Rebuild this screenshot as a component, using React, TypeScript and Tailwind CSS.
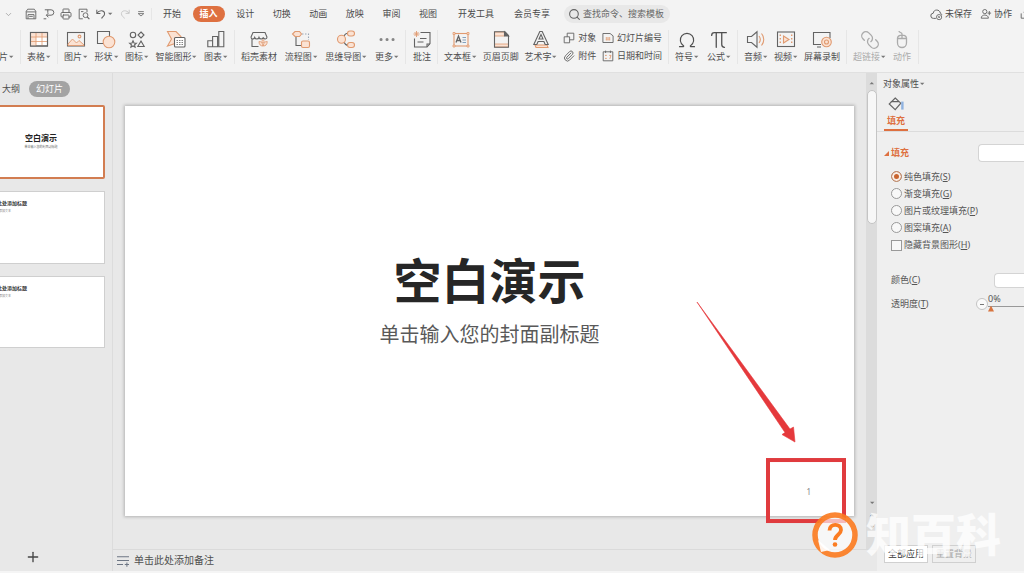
import { useState } from 'react'
import type { ReactNode } from 'react'
import { ChevronDown, Link, Mouse, Omega, Paperclip, Pi, Plus, Printer, Search } from 'lucide-react'

const INK = '#636363'
const ORANGE = '#e09a70'
const PEACH = '#fbe2d3'

const TABS = ['开始', '插入', '设计', '切换', '动画', '放映', '审阅', '视图']
const WIDE_TABS = ['开发工具', '会员专享']

const FILL_OPTIONS = [
  { id: 'solid', label: '纯色填充', hotkey: 'S' },
  { id: 'gradient', label: '渐变填充', hotkey: 'G' },
  { id: 'picture', label: '图片或纹理填充', hotkey: 'P' },
  { id: 'pattern', label: '图案填充', hotkey: 'A' },
]

function Svg({ children, className = 'size-5' }: { children: ReactNode; className?: string }) {
  return (
    <svg viewBox="0 0 20 20" className={`${className} shrink-0`} fill="none" stroke={INK} strokeWidth="1.1" aria-hidden="true">
      {children}
    </svg>
  )
}

function Caret({ className = '' }: { className?: string }) {
  return (
    <svg viewBox="0 0 6 4" className={`w-[6px] h-1 shrink-0 ${className}`} aria-hidden="true">
      <path d="M1 .8h4.400L3.200 3z" fill="#777" />
    </svg>
  )
}

/* ribbon icons */

const TableIcon = () => (
  <Svg>
    <rect x="1.5" y="2.5" width="17" height="13.5" fill="#fff" />
    <path d="M2 3h16v4H2zM2 7h5v9H2z" fill={PEACH} stroke="none" />
    <path d="M2 7h16M2 11.5h16M7 3v13M13 3v13" stroke={ORANGE} strokeWidth=".8" />
    <rect x="1.5" y="2.5" width="17" height="13.5" />
  </Svg>
)

const PictureIcon = () => (
  <Svg>
    <rect x="1.5" y="2.5" width="17" height="13.5" />
    <path d="M2 14l4.500-5 4 4 2.500-2.500 5 4.500v.5H2z" fill={PEACH} stroke={ORANGE} strokeWidth=".9" />
    <circle cx="13.500" cy="6.500" r="1.400" stroke={ORANGE} />
  </Svg>
)

const ShapesIcon = () => (
  <Svg>
    <path d="M1.500 1.500h12v12h-12z" />
    <circle cx="13" cy="12" r="5.800" fill={PEACH} stroke={ORANGE} />
  </Svg>
)

const IconsIcon = () => (
  <Svg>
    <circle cx="6" cy="5" r="2.700" />
    <path d="M14 2l3 3-3 3-3-3zM14 11l3.200 5.500h-6.400zM6 10.800l1 2.200 2.400.2-1.800 1.600.5 2.300L6 15.900l-2.100 1.200.5-2.300-1.800-1.600 2.400-.2z" />
  </Svg>
)

const SmartIcon = () => (
  <Svg>
    <path d="M1.500 1.500h8.500l5 5-3 6-10.500 3.500 4-7z" fill={PEACH} stroke={ORANGE} />
    <rect x="8.500" y="7.500" width="10.500" height="9.500" rx="1" fill="#fff" />
    <path d="M10.500 10.500h6.500M10.500 12.500h6.500M10.500 14.500h6.500" strokeWidth=".8" strokeDasharray="1.500 1" />
  </Svg>
)

const ChartIcon = () => (
  <Svg>
    <path d="M1.800 10.800h4.800v6H1.800zM6.600 6.500h5v10.300h-5zM12.800 1.500h5v15.300h-5z" />
  </Svg>
)

const StoreIcon = () => (
  <Svg>
    <path d="M4 2.500h12l2 4.500c0 2.600-3.200 2.600-3.700.5-.5 2-3.700 2-4.300 0-.5 2-3.700 2-4.300 0C5 9.600 2 9.600 2 7zM3 9v7.500h6.500" />
    <path d="M14 9.500c1.500 1 1.500 2.500 0 3.600-1.500-1.100-1.500-2.600 0-3.600zM10 11.500c2 0 3.500 1 4 4.500-2.500 0-4-1.500-4-4.500zM18.200 11.500c-2 0-3.500 1-4 4.500 2.500 0 4-1.500 4-4.500z" fill={PEACH} stroke={ORANGE} strokeWidth=".9" />
  </Svg>
)

const FlowIcon = () => (
  <Svg>
    <path d="M5 7v8.500h6" />
    <path d="M11 4h6.500v6" stroke="#9aa8b8" strokeDasharray="1.500 1.500" />
    <path d="M4 1.500h4.500L10.500 4l-2 2.500H4L1.500 4z" fill={PEACH} stroke={ORANGE} />
    <rect x="10.500" y="11" width="8" height="6.500" rx="1.500" fill={PEACH} stroke={ORANGE} />
  </Svg>
)

const MindIcon = () => (
  <Svg>
    <path d="M8 6c1-2 2-2.800 4-2.800M8 12c1 2.500 2 3.300 4 3.300" />
    <circle cx="5.500" cy="9.300" r="4" fill={PEACH} stroke={ORANGE} />
    <rect x="11.500" y="1" width="7" height="5" rx="2.500" fill={PEACH} stroke={ORANGE} />
    <rect x="11.500" y="12.500" width="7" height="5" rx="2.500" fill={PEACH} stroke={ORANGE} />
  </Svg>
)

const MoreIcon = () => (
  <Svg>
    <path d="M4 9.500h.1M10 9.500h.1M16 9.500h.1" strokeWidth="3" strokeLinecap="round" stroke="#858585" />
  </Svg>
)

const CommentIcon = () => (
  <Svg>
    <path d="M8.500 2.500H18v11L15 17H2.500V8.500" />
    <path d="M15 17v-3h3M8 8.500h6.500M5.500 12h6" />
    <path d="M4.500 1v6M1.500 4h6M2.500 2l4 4M6.500 2l-4 4" stroke={ORANGE} strokeWidth=".9" />
  </Svg>
)

const TextBoxIcon = () => (
  <Svg>
    <rect x="3" y="3.500" width="14" height="12.500" stroke={ORANGE} />
    <path d="M2 2.500h2v2H2zM16 2.500h2v2h-2zM2 15h2v2H2zM16 15h2v2h-2z" fill={PEACH} stroke={ORANGE} strokeWidth=".8" />
    <path d="M5 12.500L7.500 6l2.500 6.500M6 10.500h3" strokeWidth="1.300" />
    <path d="M11.500 7.500H15M11.500 10H15M11.500 12.500H15" stroke="#7898b8" strokeWidth=".9" />
  </Svg>
)

const HeaderFooterIcon = () => (
  <Svg>
    <path d="M3.500 2h10v4h-10zM3.500 14h14v3h-14z" fill={PEACH} stroke={ORANGE} strokeWidth=".8" />
    <path d="M3.500 1.800h10.500l3.500 3.700v11.700h-14z" />
    <path d="M13.500 1.800l4 4.200h-4z" fill={INK} />
  </Svg>
)

const WordArtIcon = () => (
  <Svg>
    <path d="M4 15h12l1 2.500H5z" fill={PEACH} stroke={ORANGE} />
    <path d="M8.800 1.500h2.400l6 13h-3l-1.300-3H7.100l-1.300 3h-3zM8 9h4L10 4.500z" fill="#f3f3f3" />
  </Svg>
)

const AudioIcon = () => (
  <Svg>
    <path d="M1.500 6.500h4L11 1.800v15.400l-5.500-4.700h-4z" />
    <path d="M13 6c1.500 2 1.500 5 0 7M15.500 3.500c3 3.500 3 8.500 0 12" stroke={ORANGE} />
  </Svg>
)

const VideoIcon = () => (
  <Svg>
    <rect x="1.500" y="2" width="17" height="14.500" />
    <path d="M7.500 6l5.500 3.500L7.500 13z" stroke={ORANGE} fill={PEACH} />
    <path d="M4.300 4.500v10M15.700 4.500v10" stroke={ORANGE} strokeWidth="1.400" strokeDasharray="1.500 2" />
  </Svg>
)

const RecordIcon = () => (
  <Svg>
    <path d="M9 14.500H1.500v-12h16.500V8M5 17h4" />
    <circle cx="14.500" cy="12" r="4.800" fill={PEACH} stroke={ORANGE} />
    <circle cx="14.500" cy="12" r="2" stroke={ORANGE} />
  </Svg>
)

const ObjectIcon = () => (
  <Svg className="size-3">
    <path d="M7 2h11v11H7z" strokeWidth="1.500" />
    <path d="M2 8h9v10H2z" fill="#f3f3f3" strokeWidth="1.500" />
  </Svg>
)

const SlideNumberIcon = () => (
  <Svg className="size-3">
    <path d="M1.500 2.500h12l5 4v11h-17z" strokeWidth="1.500" />
    <path d="M8 8.500v5.500M12 8.500v5.500M6 10h8M6 13h8" stroke={ORANGE} strokeWidth="1.200" />
  </Svg>
)

const DateIcon = () => (
  <Svg className="size-3">
    <path d="M2 3h16v15H2zM6 1v4M14 1v4" strokeWidth="1.500" />
    <path d="M5 9h3M12 9h3l-2 6M5 14h3" stroke={ORANGE} strokeWidth="1.500" />
  </Svg>
)

function Group({ width, children }: { width: string; children: ReactNode }) {
  return (
    <div className={`flex items-center justify-between shrink-0 border-r border-[#e6e6e6] px-[6px] ${width}`}>
      {children}
    </div>
  )
}

function Tool({ icon, label, menu, disabled }: { icon: ReactNode; label: string; menu?: boolean; disabled?: boolean }) {
  return (
    <button disabled={disabled} className="flex flex-col items-center shrink-0 disabled:text-[#ababab]">
      <span className="h-5 flex items-center">{icon}</span>
      <span className="flex items-center h-[14px] leading-[14px]">
        {label}
        {menu && <Caret />}
      </span>
    </button>
  )
}

function SmallTool({ icon, label }: { icon: ReactNode; label: string }) {
  return (
    <button className="flex items-center gap-[3px] h-[14px] leading-[14px]">
      {icon}
      {label}
    </button>
  )
}

function TabBar() {
  const [active, setActive] = useState('插入')

  return (
    <div className="flex items-center h-7 text-[#4a4a4a]">
      <div className="flex items-center w-[152px] pl-1 shrink-0 border-r border-[#e6e6e6]">
        <button aria-label="文件菜单" className="mr-3"><ChevronDown size={9} color="#999" /></button>
        <button aria-label="保存" className="mr-[6px]">
          <Svg className="size-3"><path d="M2 5.500L4.500 2h11L18 5.500V18H2zM5 18v-7h10v7M2 6.500h16M7 14h6" strokeWidth="1.500" /></Svg>
        </button>
        <button aria-label="输出为PDF" className="mr-[5px]">
          <Svg className="size-3"><path d="M3 3h10.500a4.500 4.500 0 010 9H6M9 8.500L5.500 12 9 15.500M1 18h4.500M8 3v5" strokeWidth="1.600" /></Svg>
        </button>
        <button aria-label="打印" className="mr-[6px]"><Printer size={12} color={INK} strokeWidth={1.8} /></button>
        <button aria-label="打印预览" className="mr-[5px]">
          <Svg className="size-3"><path d="M8 18H2V2h13v5M5 6h4" strokeWidth="1.500" /><circle cx="12.500" cy="12" r="4" strokeWidth="1.500" /><path d="M15.500 15l3.500 3.500" strokeWidth="1.800" /></Svg>
        </button>
        <button aria-label="撤销" className="flex items-center mr-[6px]">
          <Svg className="size-3"><path d="M3 3v6h6M3.500 8.500C7 3 16 3.500 16 9.500c0 4-4 5-5 8" strokeWidth="1.700" /></Svg>
          <Caret />
        </button>
        <button aria-label="恢复" className="mr-[6px]">
          <Svg className="size-3"><path d="M17 3v6h-6M16.500 8.500C13 3 4 3.500 4 9.500c0 4 4 5 5 8" stroke="#c4c4c4" strokeWidth="1.500" /></Svg>
        </button>
        <button aria-label="自定义工具栏">
          <Svg className="size-2"><path d="M3 4h14M3 9h14l-7 6z" strokeWidth="2" /></Svg>
        </button>
      </div>
      <nav className="flex items-center shrink-0 ml-1">
        <div className="flex justify-between w-[288px]">
          {TABS.map(t => (
            <button
              key={t}
              onClick={() => setActive(t)}
              className={`px-[7px] h-4 leading-4 rounded-full ${active === t ? 'bg-[#de7040] text-white font-bold' : ''}`}
            >
              {t}
            </button>
          ))}
        </div>
        <div className="flex gap-5 ml-[14px]">
          {WIDE_TABS.map(t => (
            <button key={t} onClick={() => setActive(t)} className="leading-4">{t}</button>
          ))}
        </div>
      </nav>
      <label className="flex items-center gap-[2px] ml-[14px] pl-1 w-[106px] h-[18px] shrink-0 rounded-full bg-[#e8e8e8]">
        <Search size={13} color={INK} strokeWidth={2} className="shrink-0" />
        <input
          aria-label="查找"
          placeholder="查找命令、搜索模板"
          className="min-w-0 flex-1 bg-transparent outline-none leading-4 placeholder:text-[#666]"
        />
      </label>
      <div className="flex items-center gap-2 ml-auto shrink-0">
        <button className="flex items-center gap-[2px] leading-4">
          <Svg className="size-[13px]">
            <path d="M9 16H5.500a4 4 0 01-.5-8C5.500 1.500 15 1.500 16 8c1.500.5 2 1.500 2 3" strokeWidth="1.500" />
            <circle cx="14" cy="14" r="4" strokeWidth="1.300" /><path d="M12.500 12.500l3 3M15.500 12.500l-3 3" />
          </Svg>
          未保存
        </button>
        <button className="flex items-center gap-[2px] leading-4">
          <Svg className="size-3"><circle cx="8" cy="6" r="3.500" strokeWidth="1.500" /><path d="M2 17c0-7 12-7 12 0zM15.500 5v7M12.500 8.500h6" strokeWidth="1.500" /></Svg>
          协作
        </button>
        <button aria-label="分享" className="w-1 h-3 overflow-hidden">
          <Svg className="size-3"><path d="M2 9v8h15V9M6 7l4-4 4 4M10 3v9" strokeWidth="1.500" /></Svg>
        </button>
      </div>
    </div>
  )
}

function Ribbon() {
  return (
    <div className="flex h-11 pt-[2px] pb-2 overflow-hidden text-[#4f4f4f]">
      <div className="flex items-end justify-end w-[21px] pr-[6px] shrink-0 border-r border-[#e6e6e6]">
        <button className="flex items-center h-[14px] leading-[14px]">片<Caret /></button>
      </div>
      <Group width="w-[37px]">
        <Tool icon={<TableIcon />} label="表格" menu />
      </Group>
      <Group width="w-[177px]">
        <Tool icon={<PictureIcon />} label="图片" menu />
        <Tool icon={<ShapesIcon />} label="形状" menu />
        <Tool icon={<IconsIcon />} label="图标" menu />
        <Tool icon={<SmartIcon />} label="智能图形" menu />
        <Tool icon={<ChartIcon />} label="图表" menu />
      </Group>
      <Group width="w-[171px]">
        <Tool icon={<StoreIcon />} label="稻壳素材" />
        <Tool icon={<FlowIcon />} label="流程图" menu />
        <Tool icon={<MindIcon />} label="思维导图" menu />
        <Tool icon={<MoreIcon />} label="更多" menu />
      </Group>
      <Group width="w-8">
        <Tool icon={<CommentIcon />} label="批注" />
      </Group>
      <Group width="w-[231px]">
        <Tool icon={<TextBoxIcon />} label="文本框" menu />
        <Tool icon={<HeaderFooterIcon />} label="页眉页脚" />
        <Tool icon={<WordArtIcon />} label="艺术字" menu />
        <div className="flex flex-col gap-1">
          <SmallTool icon={<ObjectIcon />} label="对象" />
          <SmallTool icon={<Paperclip size={12} strokeWidth={1.6} className="shrink-0" />} label="附件" />
        </div>
        <div className="flex flex-col gap-1">
          <SmallTool icon={<SlideNumberIcon />} label="幻灯片编号" />
          <SmallTool icon={<DateIcon />} label="日期和时间" />
        </div>
      </Group>
      <Group width="w-[69px]">
        <Tool icon={<Omega size={20} strokeWidth={1.4} />} label="符号" menu />
        <Tool icon={<Pi size={22} strokeWidth={1.4} />} label="公式" menu />
      </Group>
      <Group width="w-[109px]">
        <Tool icon={<AudioIcon />} label="音频" menu />
        <Tool icon={<VideoIcon />} label="视频" menu />
        <Tool icon={<RecordIcon />} label="屏幕录制" />
      </Group>
      <Group width="w-[72px]">
        <Tool icon={<Link size={20} strokeWidth={1.6} className="rotate-90" />} label="超链接" menu disabled />
        <Tool
          icon={
            <Svg>
              <path d="M5.500 8.500h9v4.500a4.500 4.500 0 01-9 0zM5.500 8.500c0-4.500 9-4.500 9 0M10 8.500V4c0-2-3-1-3-3" stroke="#ababab" strokeWidth="1.300" />
            </Svg>
          }
          label="动作"
          disabled
        />
      </Group>
    </div>
  )
}

function ContentThumb() {
  return (
    <button className="flex flex-col items-start shrink-0 w-[129px] aspect-video pl-[10px] pt-2 bg-white border border-[#cfcfcf] text-left text-[#333]">
      <span className="text-[5px] leading-[7px] font-bold">单击此处添加标题</span>
      <span className="text-[3px] leading-[8px] text-[#777]">单击此处添加文本</span>
    </button>
  )
}

function SlidePanel() {
  return (
    <aside className="flex flex-col w-[113px] shrink-0 overflow-hidden border-r border-[#dcdcdc]">
      <div className="flex items-center gap-[9px] pl-[2px] pt-2">
        <button className="leading-4">大纲</button>
        <button className="h-4 leading-4 px-[7px] rounded-full bg-[#a3a3a3] text-white">幻灯片</button>
      </div>
      <div className="flex flex-col items-end gap-3 pt-2 pr-[7px]">
        <button className="flex flex-col items-center justify-center shrink-0 w-[132px] aspect-video pl-1 bg-white border-2 border-[#d27d51] rounded-xs text-[#222]">
          <span className="text-[8px] leading-[10px] font-bold">空白演示</span>
          <span className="text-[3px] leading-2 text-[#666]">单击输入您的封面副标题</span>
        </button>
        <ContentThumb />
        <ContentThumb />
      </div>
      <button aria-label="新建幻灯片" className="mt-auto mb-[6px] ml-[25px] self-start">
        <Plus size={16} color="#444" strokeWidth={2} />
      </button>
    </aside>
  )
}

function Canvas() {
  return (
    <main className="flex flex-col flex-1 min-w-0">
      <div className="flex flex-1">
        <div className="flex-1 min-w-0 px-3 pt-[33px]">
          <div className="relative flex flex-col items-center justify-center w-full aspect-video bg-white shadow-[0_0_3px_1px_#b4b4b4]">
            <h1 className="text-[48px] leading-[56px] font-bold text-[#262626] -mt-5">空白演示</h1>
            <p className="mt-3 text-[20px] leading-7 text-[#595959]">单击输入您的封面副标题</p>
            <span className="absolute right-[43px] bottom-[18px] text-[8px] leading-3 text-[#888]">1</span>
            {/* callout arrow and frame around the page number */}
            <svg viewBox="0 0 729 410" className="absolute inset-0 size-full overflow-visible" aria-hidden="true">
              <path d="M572 196L665 323 668.500 321 670 336 657 328.500 660 326.500z" fill="#e5393c" stroke="#e5393c" strokeWidth=".6" />
              <rect x="643" y="354" width="76" height="61" fill="none" stroke="#e03b3e" strokeWidth="4" />
            </svg>
          </div>
        </div>
        <div className="flex flex-col items-center w-[11px] shrink-0 pt-2 pb-5 bg-[#dcdcdc]">
          <Caret className="rotate-180" />
          <div className="w-[10px] h-[134px] mt-[5px] rounded-full bg-[#f7f7f7] border border-[#c4c4c4]" />
          <div className="flex flex-col gap-2 mt-auto">
            <Caret />
            <Caret className="rotate-180" />
            <Caret />
          </div>
        </div>
      </div>
      <button className="flex items-center gap-[5px] h-[22px] pl-1 shrink-0 border-t border-[#dadada] text-[10px] text-[#4f4f4f]">
        <Svg className="size-3"><path d="M0 3h20M0 9h20M0 16h10M13 16h7M16.500 12.500v7" stroke="#6d7684" strokeWidth="1.700" /></Svg>
        单击此处添加备注
      </button>
    </main>
  )
}

function PropertyPanel() {
  const [fill, setFill] = useState('solid')
  const [opacity, setOpacity] = useState(0)

  return (
    <aside className="flex flex-col w-[147px] shrink-0 overflow-hidden bg-[#efefef]">
      <button className="flex items-center pl-[6px] pt-[3px] leading-4">对象属性<Caret /></button>
      <div className="flex border-b border-[#dcdcdc] pl-[7px]">
        <button className="flex flex-col items-center w-6 pt-1 border-b-2 border-[#de7040] text-[#de7040] font-bold">
          <Svg className="size-4">
            <path d="M9 2.500l7 6.500-7 8-7.500-7zM3.500 7h10" strokeWidth="1.400" />
            <path d="M18 7v10" stroke="#8fb2e0" strokeWidth="3" />
          </Svg>
          <span className="leading-[17px]">填充</span>
        </button>
      </div>
      <div className="flex items-center h-5 mt-[11px] pl-[7px]">
        <h2 className="flex items-center gap-[2px] font-bold text-[#de7040]">
          <svg viewBox="0 0 5 5" className="size-[5px]" aria-hidden="true"><path d="M5 0v5H0z" fill="#de7040" /></svg>
          填充
        </h2>
        <select aria-label="填充样式" className="ml-auto w-[46px] h-[18px] appearance-none rounded-l-sm bg-white border border-r-0 border-[#d4d4d4]" />
      </div>
      <div className="mt-[5px] pl-[14px] text-[#555]">
        {FILL_OPTIONS.map(o => (
          <label key={o.id} className="flex items-center gap-[2px] h-[17px] leading-[17px] whitespace-nowrap">
            <input
              type="radio"
              name="fill"
              checked={fill === o.id}
              onChange={() => setFill(o.id)}
              className="appearance-none size-[11px] shrink-0 rounded-full border border-[#999] bg-[#f8f8f8] checked:border-[#b98a6e] checked:bg-[#c9642f] checked:shadow-[inset_0_0_0_2px_#f9eee6]"
            />
            <span>{o.label}(<u>{o.hotkey}</u>)</span>
          </label>
        ))}
        <label className="flex items-center gap-[2px] h-[18px] leading-[18px] whitespace-nowrap">
          <input type="checkbox" className="appearance-none size-[11px] shrink-0 border border-[#999] bg-[#f8f8f8] checked:bg-[#c9642f]" />
          <span>隐藏背景图形(<u>H</u>)</span>
        </label>
      </div>
      <div className="flex items-center h-6 mt-[14px] pl-[14px] text-[#555]">
        <label htmlFor="color">颜色(<u>C</u>)</label>
        <select id="color" className="ml-auto w-[30px] h-[15px] appearance-none rounded-l-sm bg-white border border-r-0 border-[#d4d4d4]" />
      </div>
      <div className="flex items-center h-6 pl-[14px] text-[#555]">
        <label htmlFor="opacity">透明度(<u>T</u>)</label>
        <button
          aria-label="减少"
          onClick={() => setOpacity(v => Math.max(0, v - 1))}
          className="ml-auto flex items-center justify-center size-3 shrink-0 rounded-full bg-[#fafafa] border border-[#c4c4c4]"
        >
          <span className="w-1 h-px bg-[#777]" />
        </button>
        <div className="flex flex-col w-9 h-5 shrink-0">
          <span className="leading-[9px]">{opacity}%</span>
          <input
            id="opacity"
            type="range"
            value={opacity}
            onChange={e => setOpacity(Number(e.target.value))}
            className="w-full h-[6px] appearance-none bg-transparent [&::-webkit-slider-runnable-track]:h-px [&::-webkit-slider-runnable-track]:bg-[#999] [&::-webkit-slider-thumb]:appearance-none [&::-webkit-slider-thumb]:size-[6px] [&::-webkit-slider-thumb]:bg-[#d8743f] [&::-webkit-slider-thumb]:[clip-path:polygon(50%_0,100%_100%,0_100%)]"
          />
        </div>
      </div>
      <div className="flex gap-1 mt-auto mb-2 pl-[7px]">
        <button className="h-[18px] px-[3px] bg-white border border-[#d0d0d0] text-[#333]">全部应用</button>
        <button disabled className="h-[18px] px-[3px] border border-[#d0d0d0] text-[#a8a8a8]">重置背景</button>
      </div>
    </aside>
  )
}

function Watermark() {
  return (
    <div className="absolute right-[23px] bottom-[15px] flex items-center gap-2 pointer-events-none">
      <svg viewBox="0 0 46 46" className="size-[46px]" aria-hidden="true">
        <circle cx="23" cy="23" r="20" fill="#fff" fillOpacity=".65" stroke="#fb7c22" strokeOpacity=".92" strokeWidth="5.500" />
        <path d="M6 28l3 12 9-2z" fill="#fff" fillOpacity=".9" />
        <path d="M17.500 18.500c0-7.500 11.500-7.500 11.500-.5 0 4.500-6 5-6 10" fill="none" stroke="#fb7c22" strokeWidth="3.800" />
        <circle cx="23" cy="32.500" r="2.300" fill="#fb7c22" />
      </svg>
      <span className="text-[45px] leading-[46px] font-black text-white/75">知百科</span>
    </div>
  )
}

export default function App() {
  return (
    <div className="relative flex flex-col min-h-screen overflow-hidden bg-[#e8e8e8] text-[9px] text-[#4f4f4f] font-['Noto_Sans','Noto_Sans_CJK_SC',sans-serif]">
      <header className="bg-[#f3f3f3] border-b border-[#e0e0e0]">
        <TabBar />
        <Ribbon />
      </header>
      <div className="flex flex-1">
        <SlidePanel />
        <Canvas />
        <PropertyPanel />
      </div>
      <footer className="h-[2px] bg-[#f5f5f5]" />
      <Watermark />
    </div>
  )
}
